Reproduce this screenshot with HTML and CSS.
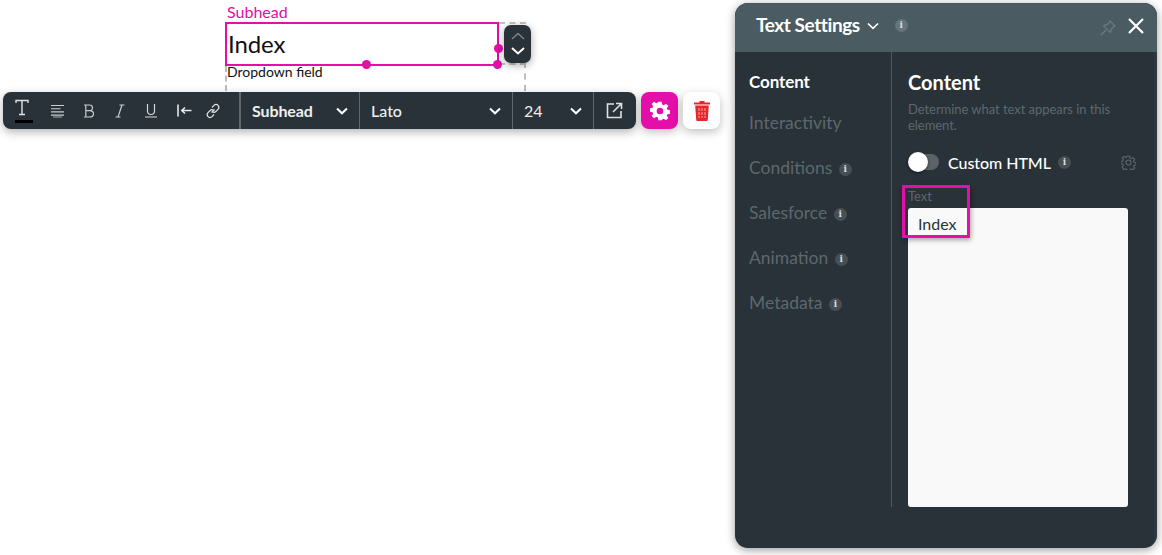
FILE: index.html
```html
<!DOCTYPE html>
<html lang="en">
<head>
<meta charset="utf-8">
<title>Text Settings</title>
<link rel="stylesheet" href="styles.css">
</head>
<body>
<div class="canvas">
  <div class="guide guide-left"></div>
  <div class="guide guide-right"></div>
  <div class="guide-top"></div>
  <div class="guide-bottom"></div>
  <div class="element">
    <div class="el-label">Subhead</div>
    <div class="el-box">Index</div>
    <div class="el-sub">Dropdown field</div>
    <span class="handle h-right"></span>
    <span class="handle h-bottom"></span>
    <span class="handle h-corner"></span>
  </div>
  <div class="stepper">
    <svg width="16" height="10" viewBox="0 0 16 10"><path d="M2 8l6-5.500L14 8" fill="none" stroke="#7b8488" stroke-width="1.600"/></svg>
    <svg width="16" height="10" viewBox="0 0 16 10"><path d="M2 2l6 5.500L14 2" fill="none" stroke="#fff" stroke-width="2"/></svg>
  </div>

  <div class="toolbar-row">
    <div class="toolbar">
      <div class="tools">
        <span class="tool tool-t">
          <svg width="16" height="17" viewBox="0 0 16 17"><path d="M2 4V1.500h12V4M8 1.500V15M5 15.500h6" fill="none" stroke="#dfe2e3" stroke-width="1.400"/></svg>
          <span class="t-bar"></span>
        </span>
        <span class="tool"><svg width="15" height="14" viewBox="0 0 15 14"><path d="M1 1.500h13M1 4.700h9.500M1 7.900h13M1 11.100h13" fill="none" stroke="#c9cdcf" stroke-width="1.100"/><path d="M3 13h9" stroke="#c9cdcf" stroke-width=".8"/></svg></span>
        <span class="tool"><svg width="12" height="14" viewBox="0 0 12 14"><path d="M1 1h5.500c2 0 3 1 3 2.800S8.500 6.600 6.500 6.600H2.800M6.500 6.600c2.500 0 4 1.100 4 3.100S9 13 6.500 13H1M2.800 1v12" fill="none" stroke="#c9cdcf" stroke-width="1.200"/></svg></span>
        <span class="tool"><svg width="10" height="14" viewBox="0 0 10 14"><path d="M4.500 1h5M7 1L3 13M.5 13h5" fill="none" stroke="#c9cdcf" stroke-width="1.200"/></svg></span>
        <span class="tool"><svg width="14" height="15" viewBox="0 0 14 15"><path d="M3.500 1v7c0 2.500 1.300 3.500 3.500 3.500s3.500-1 3.500-3.500V1M1 14h12" fill="none" stroke="#d5d8da" stroke-width="1.200"/></svg></span>
        <span class="tool tool-indent"><svg width="15" height="13" viewBox="0 0 15 13"><path d="M1 .5v12" stroke="#e6e8e9" stroke-width="1.600"/><path d="M14.500 6.500H5M8 3.500L4.800 6.500 8 9.500" fill="none" stroke="#e6e8e9" stroke-width="1.600"/></svg></span>
        <span class="tool tool-link"><svg width="16" height="16" viewBox="0 0 16 16"><g fill="none" stroke="#dfe2e3" stroke-width="1.200"><path d="M6.500 9.500l3-3"/><path d="M7 4.500l2-2.200c1.200-1.200 3-1.200 4 0s1.200 2.800 0 4l-2.200 2.200c-1 1-2.300 1-3.300.2"/><path d="M9 11.500l-2 2.200c-1.200 1.200-3 1.200-4 0s-1.200-2.800 0-4l2.200-2.200c1-1 2.300-1 3.300-.2"/></g></svg></span>
      </div>
      <div class="select sel-style">
        <span>Subhead</span>
        <svg class="chev" width="12" height="8" viewBox="0 0 12 8"><path d="M1 1.500l5 4.800 5-4.800" fill="none" stroke="#fff" stroke-width="2"/></svg>
      </div>
      <div class="select sel-font">
        <span>Lato</span>
        <svg class="chev" width="12" height="8" viewBox="0 0 12 8"><path d="M1 1.500l5 4.800 5-4.800" fill="none" stroke="#fff" stroke-width="2"/></svg>
      </div>
      <div class="select sel-size">
        <span>24</span>
        <svg class="chev" width="12" height="8" viewBox="0 0 12 8"><path d="M1 1.500l5 4.800 5-4.800" fill="none" stroke="#fff" stroke-width="2"/></svg>
      </div>
      <div class="open-btn">
        <svg width="17" height="17" viewBox="0 0 17 17"><path d="M8 2H1.500v13.500H15V9" fill="none" stroke="#dfe2e3" stroke-width="1.600"/><path d="M7 10l8-8M10 1.500h5.500V7" fill="none" stroke="#dfe2e3" stroke-width="1.600"/></svg>
      </div>
    </div>
    <div class="square gear-btn">
      <svg width="20" height="20" viewBox="0 0 24 24"><path fill="#fff" fill-rule="evenodd" d="M10 1h4l.6 3.200 1.900.8 2.700-1.800 2.800 2.800-1.800 2.700.8 1.900 3 .6v4l-3 .6-.8 1.900 1.800 2.700-2.800 2.800-2.700-1.800-1.900.8L14 23h-4l-.6-3.200-1.900-.8-2.700 1.800L2 18l1.800-2.700-.8-1.900L0 12.800v-4l3-.6.800-1.900L2 3.600 4.800.8l2.700 1.800 1.900-.8zM12 8a4 4 0 1 0 0 8 4 4 0 0 0 0-8z"/></svg>
    </div>
    <div class="square trash-btn">
      <svg width="16" height="20" viewBox="0 0 16 20"><path fill="#e8262a" d="M5.500 0h5v1.500H16V3.500H0V1.500h5.500zM1.200 4.500h13.600L13.800 18.500c-.1 1-.6 1.500-1.500 1.500H3.700c-.9 0-1.400-.5-1.500-1.500z"/><path d="M5 7v10M8 7v10M11 7v10" stroke="#f7a9aa" stroke-width="1" stroke-dasharray="3 1"/></svg>
    </div>
  </div>

  <section class="panel">
    <header class="panel-head">
      <span class="panel-title">Text Settings</span>
      <svg class="title-chev" width="12" height="8" viewBox="0 0 12 8"><path d="M1 1.500l5 4.800 5-4.800" fill="none" stroke="#fff" stroke-width="1.700"/></svg>
      <span class="info info-head">i</span>
      <span class="head-spacer"></span>
      <svg class="pin" width="16" height="16" viewBox="0 0 16 16"><path d="M10 1l5 5-1.300.6L11 9.200c.4 1.300.1 2.400-.8 3.300L3.500 5.800c.9-.9 2-1.200 3.300-.8l2.600-2.700zM6 10l-5 5" fill="none" stroke="#6c7b81" stroke-width="1.200"/></svg>
      <svg class="close" width="16" height="16" viewBox="0 0 16 16"><path d="M1 1l14 14M15 1L1 15" stroke="#fff" stroke-width="2.200"/></svg>
    </header>
    <div class="panel-body">
      <nav class="nav">
        <div class="nav-item active">Content</div>
        <div class="nav-item">Interactivity</div>
        <div class="nav-item">Conditions <span class="info">i</span></div>
        <div class="nav-item">Salesforce <span class="info">i</span></div>
        <div class="nav-item">Animation <span class="info">i</span></div>
        <div class="nav-item">Metadata <span class="info">i</span></div>
      </nav>
      <div class="content">
        <h2 class="content-title">Content</h2>
        <p class="content-desc">Determine what text appears in this element.</p>
        <div class="html-row">
          <span class="toggle"><span class="knob"></span></span>
          <span class="html-label">Custom HTML</span>
          <span class="info">i</span>
          <span class="head-spacer"></span>
          <svg class="cog" width="15" height="15" viewBox="0 0 24 24"><path fill="none" stroke="#5d686d" stroke-width="1.800" d="M10 2h4l.6 3 2 .9 2.600-1.700 2.700 2.700-1.700 2.600.9 2 3 .6v3.800l-3 .6-.9 2 1.700 2.600-2.700 2.700-2.600-1.700-2 .9-.6 3h-4l-.6-3-2-.9-2.600 1.700L2 19.100l1.700-2.600-.9-2-3-.6v-3.800l3-.6.9-2L2 4.900l2.700-2.700 2.600 1.700 2-.9z"/><circle cx="12" cy="12" r="4" fill="none" stroke="#5d686d" stroke-width="1.800"/></svg>
        </div>
        <div class="field">
          <div class="field-label">Text</div>
          <div class="textarea"></div>
          <div class="highlight"><span>Index</span></div>
        </div>
      </div>
    </div>
  </section>
</div>
</body>
</html>
```

FILE: styles.css
```css
* { box-sizing: border-box; }
html, body { margin: 0; padding: 0; height: 100%; background: #fff; overflow: hidden; }
body { font-family: Lato, "Liberation Sans", sans-serif; color: #000; }
.canvas { position: relative; width: 1162px; height: 555px; overflow: hidden; }

.guide { position: absolute; top: 62px; height: 29px; width: 0; border-left: 2px dashed #bdbdbd; }
.guide-left { left: 225px; top: 66px; height: 25px; }
.guide-right { left: 524px; }
.guide-top { position: absolute; left: 499px; top: 22px; width: 27px; border-top: 2px dashed #c4c4c4; }
.guide-bottom { position: absolute; left: 499px; top: 63px; width: 27px; border-top: 2px dashed #c4c4c4; }

.element { position: absolute; left: 225px; top: 4px; width: 274px; }
.el-label { height: 18px; padding-left: 2px; font-size: 16px; line-height: 16px; color: #e40ea8; }
.el-box { height: 44px; border: 2px solid #e40ea8; padding-left: 1px; font-size: 24px; line-height: 40px; letter-spacing: -.1px; color: #111; }
.el-sub { padding-left: 2px; font-size: 14px; line-height: 12px; color: #111; }
.handle { position: absolute; width: 9px; height: 9px; border-radius: 50%; background: #e40ea8; }
.h-right { left: 269px; top: 40px; }
.h-bottom { left: 137px; top: 56px; }
.h-corner { left: 268px; top: 56px; }

.stepper { position: absolute; left: 504px; top: 25px; width: 27px; height: 38px; border-radius: 7px; background: #283238; box-shadow: 0 2px 8px rgba(0,0,0,.35); display: flex; flex-direction: column; align-items: center; justify-content: center; gap: 5px; padding-bottom: 1px; }

.toolbar-row { position: absolute; left: 3px; top: 92px; display: flex; gap: 5px; }
.toolbar { display: flex; width: 633px; height: 37px; border-radius: 8px; background: #283238; box-shadow: 0 3px 10px rgba(0,0,0,.3); color: #fff; }
.tools { width: 238px; flex: none; display: flex; align-items: center; padding-left: 9px; border-right: 2px solid #5f6a70; }
.tool { width: 31px; display: flex; align-items: center; justify-content: center; height: 37px; flex: none; }
.tool-t { width: 20px; position: relative; margin-right: 10px; }
.tool-indent { width: 36px; }
.tool-link { width: 22px; }
.tool-t svg { margin-top: -6px; }
.t-bar { position: absolute; left: 3px; top: 28px; width: 18px; height: 3px; background: #000; }
.select { display: flex; align-items: center; justify-content: space-between; height: 37px; flex: none; font-size: 16px; font-weight: 500; padding-left: 11px; padding-right: 11px; border-right: 1px solid #5f6a70; color: #eef0f0; }
.sel-style { width: 119px; font-weight: 700; letter-spacing: -.1px; }
.sel-font { width: 153px; }
.sel-size { width: 81px; font-weight: 400; padding-right: 11px; }
.open-btn { flex: 1; display: flex; align-items: center; justify-content: center; padding-right: 2px; }
.square { width: 37px; height: 37px; border-radius: 8px; display: flex; align-items: center; justify-content: center; box-shadow: 0 3px 10px rgba(0,0,0,.25); }
.gear-btn { background: #e40ea8; }
.trash-btn { background: #fff; }

.panel { position: absolute; left: 735px; top: 3px; width: 422px; height: 545px; border-radius: 13px; background: #283238; box-shadow: 0 2px 10px rgba(0,0,0,.4); overflow: hidden; display: flex; flex-direction: column; }
.panel-head { height: 49px; flex: none; background: #4a5b62; display: flex; align-items: center; padding: 0 13px 4px 21px; }
.panel-title { font-size: 19px; font-weight: 700; color: #fff; letter-spacing: -.42px; margin-top: -2px; }
.title-chev { margin-left: 7px; }
.info { display: inline-flex; align-items: center; justify-content: center; width: 13px; height: 13px; border-radius: 50%; background: #474f54; color: #d9dcdd; font: 700 9px/1 "DejaVu Serif", serif; vertical-align: 2px; margin-left: 2px; }
.info-head { background: #66757b; margin-left: 16px; }
.head-spacer { flex: 1; }
.pin { margin-right: 12px; margin-top: 4px; }
.close { margin-top: 1px; }

.panel-body { flex: 1; display: flex; min-height: 0; border-right: 3px solid #33404680; }
.nav { width: 157px; height: 455px; border-right: 1px solid #4d585d; padding: 16px 0 0 14px; flex: none; }
.nav-item { height: 45px; font-size: 17.5px; line-height: 28px; color: #5d686d; white-space: nowrap; }
.nav-item.active { height: 41px; font-size: 17px; font-weight: 700; color: #fff; letter-spacing: -.1px; }
.content { flex: 1; padding: 16px 0 0 16px; min-width: 0; }
.content-title { margin: 0; font-size: 20px; line-height: 28px; font-weight: 700; color: #fff; }
.content-desc { margin: 5px 0 0; width: 220px; font-size: 13px; line-height: 16px; letter-spacing: -.05px; color: #5d686d; }
.html-row { display: flex; align-items: center; height: 24px; margin-top: 17px; padding-right: 18px; }
.toggle { position: relative; width: 31px; height: 20px; display: block; margin-right: 9px; }
.toggle::before { content: ""; position: absolute; left: 3px; right: 0; top: 2px; height: 16px; border-radius: 8px; background: #5b6367; }
.knob { position: absolute; left: 0; top: 0; width: 20px; height: 20px; border-radius: 50%; background: #fff; box-shadow: 0 1px 3px rgba(0,0,0,.5); }
.html-label { font-size: 16px; color: #fff; font-weight: 500; letter-spacing: -.05px; }
.html-row .info { margin-left: 7px; margin-top: 0; }
.field { position: relative; margin-top: 14px; }
.field-label { height: 20px; font-size: 13px; line-height: 17px; color: #5d686d; }
.textarea { width: 220px; height: 299px; border-radius: 3px; background: #f9f9f9; }
.highlight { position: absolute; left: -6px; top: -3px; width: 68px; height: 53px; border: 3px solid #e40ea8; box-shadow: 1px 2px 5px rgba(0,0,0,.35); padding: 26px 0 0 13px; font-size: 16px; line-height: 20px; color: #293339; }
```
